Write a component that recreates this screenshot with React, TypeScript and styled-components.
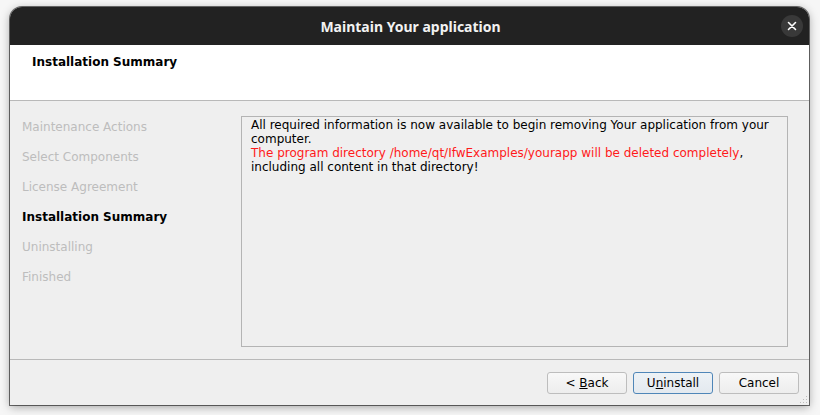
import styled, { createGlobalStyle } from "styled-components";

const GlobalStyle = createGlobalStyle`
  html, body {
    margin: 0;
    padding: 0;
    background: #f6f6f6;
  }
  body {
    font-family: "DejaVu Sans", "Noto Sans", sans-serif;
    font-size: 12px;
  }
`;

const Page = styled.div`
  width: 820px;
  height: 415px;
  padding: 7px 11px 10px 10px;
  box-sizing: border-box;
`;

const Window = styled.div`
  width: 799px;
  height: 398px;
  display: flex;
  flex-direction: column;
  border-radius: 12px 12px 0 0;
  overflow: hidden;
  background: #efefef;
  box-shadow: 0 2px 10px rgba(0, 0, 0, 0.35), 0 0 0 1px rgba(0, 0, 0, 0.55);
`;

const TitleBar = styled.div`
  position: relative;
  height: 38px;
  flex: none;
  background: #222222;
  display: flex;
  align-items: center;
  justify-content: center;
`;

const Title = styled.div`
  color: #f2f2f2;
  font-family: "Noto Sans", "DejaVu Sans", sans-serif;
  font-weight: 700;
  font-size: 14px;
  margin-left: 2px;
`;

const CloseButton = styled.div`
  position: absolute;
  right: 6px;
  top: 8px;
  width: 22px;
  height: 22px;
  border-radius: 50%;
  background: #393939;
  display: flex;
  align-items: center;
  justify-content: center;
`;

const Header = styled.div`
  height: 56px;
  flex: none;
  background: #ffffff;
  border-bottom: 1px solid #b9b9b9;
  padding: 9px 0 0 22px;
  box-sizing: border-box;
`;

const HeaderTitle = styled.div`
  font-weight: 700;
  font-size: 12px;
  line-height: 16px;
  color: #000;
`;

const Body = styled.div`
  flex: 1;
  display: flex;
  min-height: 0;
`;

const Sidebar = styled.div`
  width: 231px;
  flex: none;
  padding: 11px 0 0 12px;
  box-sizing: border-box;
  display: flex;
  flex-direction: column;
`;

const Step = styled.div<{ $active?: boolean }>`
  height: 30px;
  line-height: 30px;
  font-size: 12px;
  font-weight: ${(p) => (p.$active ? 700 : 400)};
  color: ${(p) => (p.$active ? "#000000" : "#bdbdbd")};
`;

const ContentArea = styled.div`
  flex: 1;
  padding: 15px 21px 12px 0;
  display: flex;
`;

const TextPane = styled.div`
  flex: 1;
  border: 1px solid #b4b4b4;
  padding: 1px 10px 0 9px;
  font-size: 12px;
  line-height: 14px;
  color: #000;
`;

const Line = styled.div``;

const Warning = styled.span`
  color: #ff1a1a;
`;

const Footer = styled.div`
  height: 46px;
  flex: none;
  border-top: 1px solid #b9b9b9;
  box-sizing: border-box;
  position: relative;
  display: flex;
  justify-content: flex-end;
  align-items: flex-start;
  gap: 6px;
  padding: 12px 10px 0 0;
`;

const Button = styled.div<{ $default?: boolean }>`
  width: 80px;
  height: 22px;
  box-sizing: border-box;
  border-radius: 3px;
  border: 1px solid ${(p) => (p.$default ? "#4f86b8" : "#bdbdbd")};
  background: ${(p) =>
    p.$default
      ? "linear-gradient(#edf2f6, #e3e9ef)"
      : "linear-gradient(#f8f8f8, #ededed)"};
  display: flex;
  align-items: center;
  justify-content: center;
  font-size: 12px;
  color: #000;
`;

const Mnemonic = styled.span`
  text-decoration: underline;
`;

const Grip = styled.svg`
  position: absolute;
  right: 1px;
  bottom: 1px;
`;

const steps = [
  "Maintenance Actions",
  "Select Components",
  "License Agreement",
  "Installation Summary",
  "Uninstalling",
  "Finished",
];

export default function App() {
  return (
    <>
      <GlobalStyle />
      <Page>
        <Window>
          <TitleBar>
            <Title>Maintain Your application</Title>
            <CloseButton>
              <svg width="10" height="10" viewBox="0 0 10 10">
                <path
                  d="M1.5 1.5 L8.5 8.5 M8.5 1.5 L1.5 8.5"
                  stroke="#ffffff"
                  strokeWidth="1.6"
                  strokeLinecap="round"
                />
              </svg>
            </CloseButton>
          </TitleBar>
          <Header>
            <HeaderTitle>Installation Summary</HeaderTitle>
          </Header>
          <Body>
            <Sidebar>
              {steps.map((s) => (
                <Step key={s} $active={s === "Installation Summary"}>
                  {s}
                </Step>
              ))}
            </Sidebar>
            <ContentArea>
              <TextPane>
                <Line>All required information is now available to begin removing Your application from your</Line>
                <Line>computer.</Line>
                <Line>
                  <Warning>The program directory /home/qt/IfwExamples/yourapp will be deleted completely</Warning>,
                </Line>
                <Line>including all content in that directory!</Line>
              </TextPane>
            </ContentArea>
          </Body>
          <Footer>
            <Button>
              &lt;&nbsp;<Mnemonic>B</Mnemonic>ack
            </Button>
            <Button $default>
              U<Mnemonic>n</Mnemonic>install
            </Button>
            <Button>Cancel</Button>
            <Grip width="10" height="10" viewBox="0 0 10 10">
              {[
                [8, 2],
                [5, 5],
                [8, 5],
                [2, 8],
                [5, 8],
                [8, 8],
              ].map(([x, y]) => (
                <rect key={`${x}-${y}`} x={x} y={y} width="1" height="1" fill="#bcbcbc" />
              ))}
            </Grip>
          </Footer>
        </Window>
      </Page>
    </>
  );
}
